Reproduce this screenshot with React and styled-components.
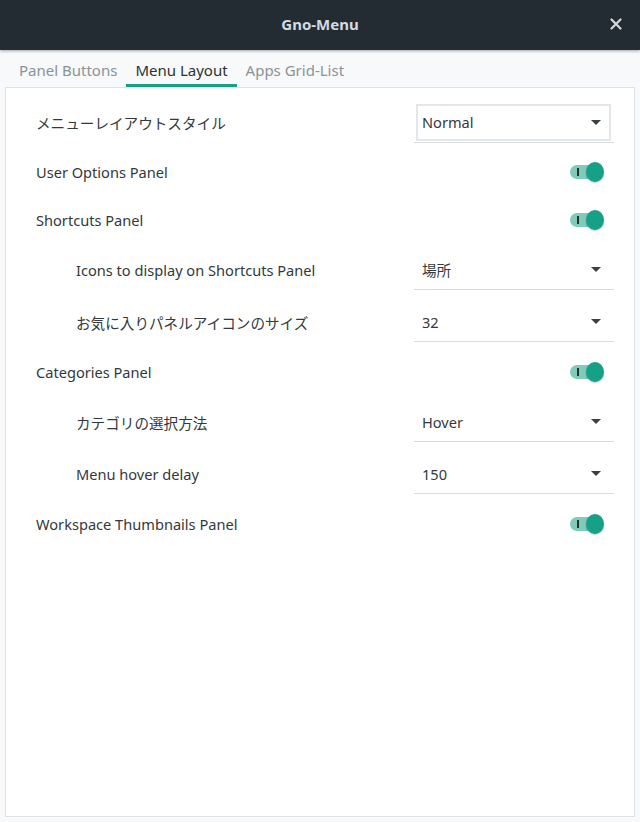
import React from "react";
import styled, { createGlobalStyle } from "styled-components";

const Global = createGlobalStyle`
  html, body { margin: 0; padding: 0; }
  body {
    background: #f7f9fa;
    font-family: "Noto Sans", "Noto Sans CJK JP", sans-serif;
    font-size: 14.6px;
    color: #32393d;
  }
`;

const Window = styled.div`
  width: 640px;
  height: 822px;
  display: flex;
  flex-direction: column;
  background: #f7f9fa;
`;

const Header = styled.header`
  height: 50px;
  flex: none;
  background: #232c32;
  display: flex;
  align-items: center;
  justify-content: center;
  position: relative;
  box-shadow: 0 1px 3px rgba(0, 0, 0, 0.35);
  z-index: 1;
`;

const Title = styled.div`
  color: #d5dbe0;
  font-weight: 700;
  font-size: 15px;
  padding-bottom: 2px;
`;

const Close = styled.button`
  position: absolute;
  right: 17px;
  top: 17px;
  width: 14px;
  height: 14px;
  padding: 0;
  border: 0;
  background: none;
  display: flex;
  align-items: center;
  justify-content: center;
`;

const Tabs = styled.nav`
  height: 37px;
  flex: none;
  display: flex;
  align-items: stretch;
  padding-left: 10px;
`;

const Tab = styled.div`
  padding: 5px 9px 0;
  display: flex;
  align-items: center;
  font-size: 15px;
  color: ${(p) => (p.$active ? "#2b3235" : "#8b9398")};
  border-bottom: 3px solid ${(p) => (p.$active ? "#16a085" : "transparent")};
  box-sizing: border-box;
`;

const Frame = styled.main`
  flex: 1;
  margin: 0 5px 5px;
  background: #ffffff;
  border: 1px solid #dfe3e6;
  padding: 8px 20px 0 30px;
  display: flex;
  flex-direction: column;
`;

const Row = styled.div`
  height: ${(p) => (p.$tall ? 52 : 48)}px;
  display: flex;
  align-items: center;
  justify-content: space-between;
`;

const Label = styled.div`
  padding-left: ${(p) => (p.$indent ? 40 : 0)}px;
  color: #32393d;
`;

const DropLine = styled.div`
  width: 200px;
  height: 40px;
  box-sizing: border-box;
  border-bottom: 1px solid #d9dcde;
  display: flex;
  align-items: center;
  justify-content: space-between;
  padding: 0 13px 0 8px;
`;

const ComboLine = styled.div`
  width: 200px;
  box-sizing: border-box;
  border-bottom: 1px solid #d9dcde;
  padding: 0 3px 1px 2px;
  margin-top: 2px;
`;

const ComboBox = styled.div`
  height: 37px;
  box-sizing: border-box;
  border: 2px solid #e4e6e8;
  display: flex;
  align-items: center;
  justify-content: space-between;
  padding: 0 8px 0 4px;
`;

const Value = styled.span`
  color: #32393d;
`;

const Arrow = styled.span`
  width: 0;
  height: 0;
  border-left: 5px solid transparent;
  border-right: 5px solid transparent;
  border-top: 5px solid #3a4145;
`;

const Switch = styled.div`
  position: relative;
  width: 34px;
  height: 20px;
  margin-right: 10px;
  display: flex;
  align-items: center;
`;

const Track = styled.div`
  width: 26px;
  height: 14px;
  border-radius: 7px;
  background: #80ccbb;
  position: relative;
`;

const Mark = styled.div`
  position: absolute;
  left: 7px;
  top: 3px;
  width: 2px;
  height: 8px;
  background: #263035;
`;

const Knob = styled.div`
  position: absolute;
  right: 0;
  top: 0;
  width: 18px;
  height: 20px;
  border-radius: 50%;
  background: #16a085;
  box-shadow: 0 1px 2px rgba(0, 0, 0, 0.25);
`;

const Toggle = () => (
  <Switch>
    <Track>
      <Mark />
    </Track>
    <Knob />
  </Switch>
);

const Dropdown = ({ value }) => (
  <DropLine>
    <Value>{value}</Value>
    <Arrow />
  </DropLine>
);

export default function App() {
  return (
    <>
      <Global />
      <Window>
        <Header>
          <Title>Gno-Menu</Title>
          <Close aria-label="close">
            <svg width="12" height="12" viewBox="0 0 12 12">
              <path d="M1.5 1.5 L10.5 10.5 M10.5 1.5 L1.5 10.5" stroke="#d5dbe0" strokeWidth="2.2" strokeLinecap="round" />
            </svg>
          </Close>
        </Header>
        <Tabs>
          <Tab>Panel Buttons</Tab>
          <Tab $active>Menu Layout</Tab>
          <Tab>Apps Grid-List</Tab>
        </Tabs>
        <Frame>
          <Row $tall>
            <Label>メニューレイアウトスタイル</Label>
            <ComboLine>
              <ComboBox>
                <Value>Normal</Value>
                <Arrow />
              </ComboBox>
            </ComboLine>
          </Row>
          <Row>
            <Label>User Options Panel</Label>
            <Toggle />
          </Row>
          <Row>
            <Label>Shortcuts Panel</Label>
            <Toggle />
          </Row>
          <Row $tall>
            <Label $indent>Icons to display on Shortcuts Panel</Label>
            <Dropdown value="場所" />
          </Row>
          <Row $tall>
            <Label $indent>お気に入りパネルアイコンのサイズ</Label>
            <Dropdown value="32" />
          </Row>
          <Row>
            <Label>Categories Panel</Label>
            <Toggle />
          </Row>
          <Row $tall>
            <Label $indent>カテゴリの選択方法</Label>
            <Dropdown value="Hover" />
          </Row>
          <Row $tall>
            <Label $indent>Menu hover delay</Label>
            <Dropdown value="150" />
          </Row>
          <Row>
            <Label>Workspace Thumbnails Panel</Label>
            <Toggle />
          </Row>
        </Frame>
      </Window>
    </>
  );
}
